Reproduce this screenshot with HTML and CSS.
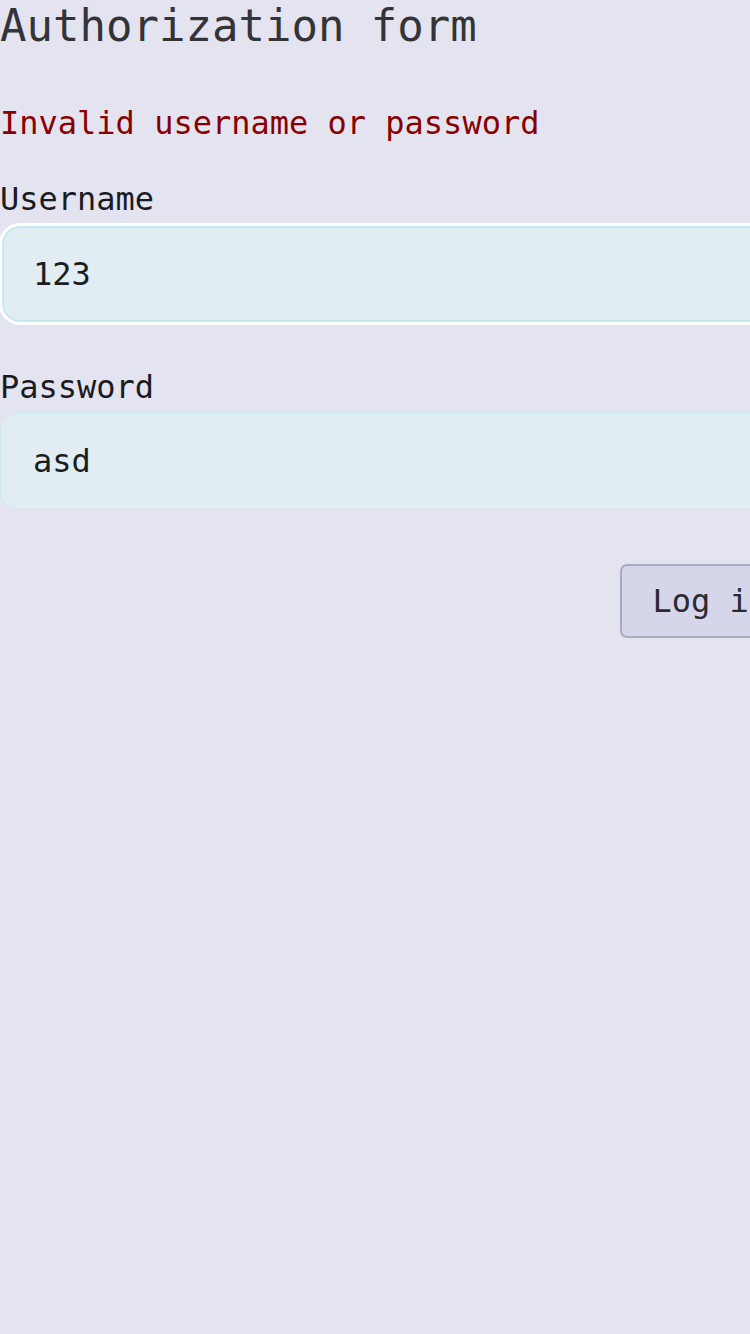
FILE: index.html
```html
<!DOCTYPE html>
<html>
<head>
<meta charset="utf-8">
<link rel="stylesheet" href="styles.css">
</head>
<body>
<main class="page">
  <h1 class="title">Authorization form</h1>
  <p class="error">Invalid username or password</p>
  <form class="form">
    <label class="field field-focus">
      <span class="label">Username</span>
      <input class="input input-focus" type="text" value="123">
    </label>
    <label class="field">
      <span class="label">Password</span>
      <input class="input" type="text" value="asd">
    </label>
    <div class="actions">
      <button class="button" type="button">Log in</button>
    </div>
  </form>
</main>
</body>
</html>
```
FILE: styles.css
```css
html, body {
  margin: 0;
  padding: 0;
  background: #e4e4f0;
}
body {
  font-family: "DejaVu Sans Mono", monospace;
  min-height: 1334px;
}
.page {
  width: 800px;
  display: flex;
  flex-direction: column;
}
.title {
  margin: 0;
  font-size: 44px;
  font-weight: normal;
  color: #333338;
}
.error {
  margin: 53px 0 0;
  font-size: 32px;
  color: #880000;
}
.form {
  margin-top: 38px;
  display: flex;
  flex-direction: column;
}
.field {
  display: flex;
  flex-direction: column;
  gap: 6px;
  margin-bottom: 48px;
}
.field-focus {
  gap: 8px;
  margin-bottom: 46px;
}
.label {
  font-size: 32px;
  color: #1a1a22;
}
.input {
  box-sizing: border-box;
  width: 800px;
  height: 98px;
  margin: 0;
  padding: 0 32px;
  font-family: "DejaVu Sans Mono", monospace;
  font-size: 32px;
  color: #1a1e22;
  background: #e1edf2;
  border: 1px solid #cde9f0;
  border-radius: 18px;
}
.input-focus {
  margin-left: 2px;
  height: 96px;
  padding: 0 29px;
  border: 2px solid #c4ebf2;
  outline: 3px solid #ffffff;
}
.actions {
  display: flex;
  justify-content: flex-end;
  margin-top: 6px;
}
.button {
  box-sizing: border-box;
  height: 74px;
  padding: 0 30px;
  font-family: "DejaVu Sans Mono", monospace;
  font-size: 32px;
  color: #2a2a30;
  background: #d6d6ea;
  border: 2px solid #a9a9bf;
  border-radius: 7px;
}
```
